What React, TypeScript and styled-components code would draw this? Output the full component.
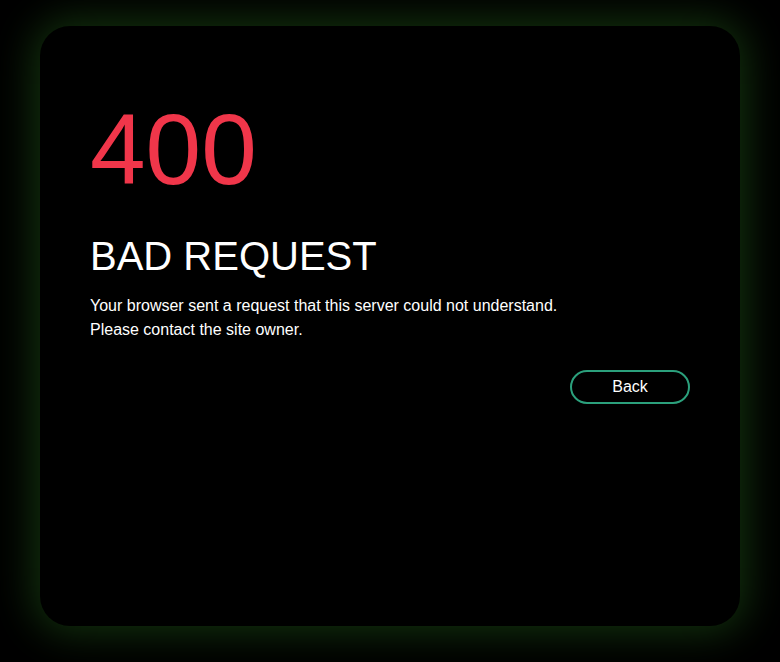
import React from "react";
import styled, { createGlobalStyle } from "styled-components";

const Global = createGlobalStyle`
  html, body { margin: 0; padding: 0; background: #000; }
  body { font-family: "Liberation Sans", Arial, sans-serif; }
`;

const Page = styled.div`
  width: 780px;
  height: 662px;
  box-sizing: border-box;
  padding: 26px 40px 36px;
  background: #000;
`;

const Card = styled.main`
  height: 600px;
  box-sizing: border-box;
  border-radius: 30px;
  background: #000;
  box-shadow: 0 0 40px 6px rgba(24, 64, 18, 0.8);
  padding: 66px 50px 0;
  display: flex;
  flex-direction: column;
`;

const Code = styled.h1`
  margin: 0;
  font-size: 100px;
  font-weight: 400;
  line-height: 1.15;
  color: #f0364a;
`;

const Title = styled.h2`
  margin: 26px 0 0;
  font-size: 40px;
  font-weight: 400;
  line-height: 1.15;
  color: #fff;
`;

const Message = styled.p`
  margin: 15px 0 0;
  font-size: 16px;
  line-height: 24px;
  color: #fff;
`;

const Actions = styled.div`
  display: flex;
  justify-content: flex-end;
  margin-top: 28px;
`;

const Button = styled.button`
  width: 120px;
  height: 34px;
  border: 2px solid #2ba07c;
  border-radius: 17px;
  background: transparent;
  color: #fff;
  font-family: "Liberation Sans", Arial, sans-serif;
  font-size: 16px;
  cursor: pointer;
`;

export default function App() {
  return (
    <>
      <Global />
      <Page>
        <Card>
          <Code>400</Code>
          <Title>BAD REQUEST</Title>
          <Message>
            Your browser sent a request that this server could not understand.
            <br />
            Please contact the site owner.
          </Message>
          <Actions>
            <Button>Back</Button>
          </Actions>
        </Card>
      </Page>
    </>
  );
}
